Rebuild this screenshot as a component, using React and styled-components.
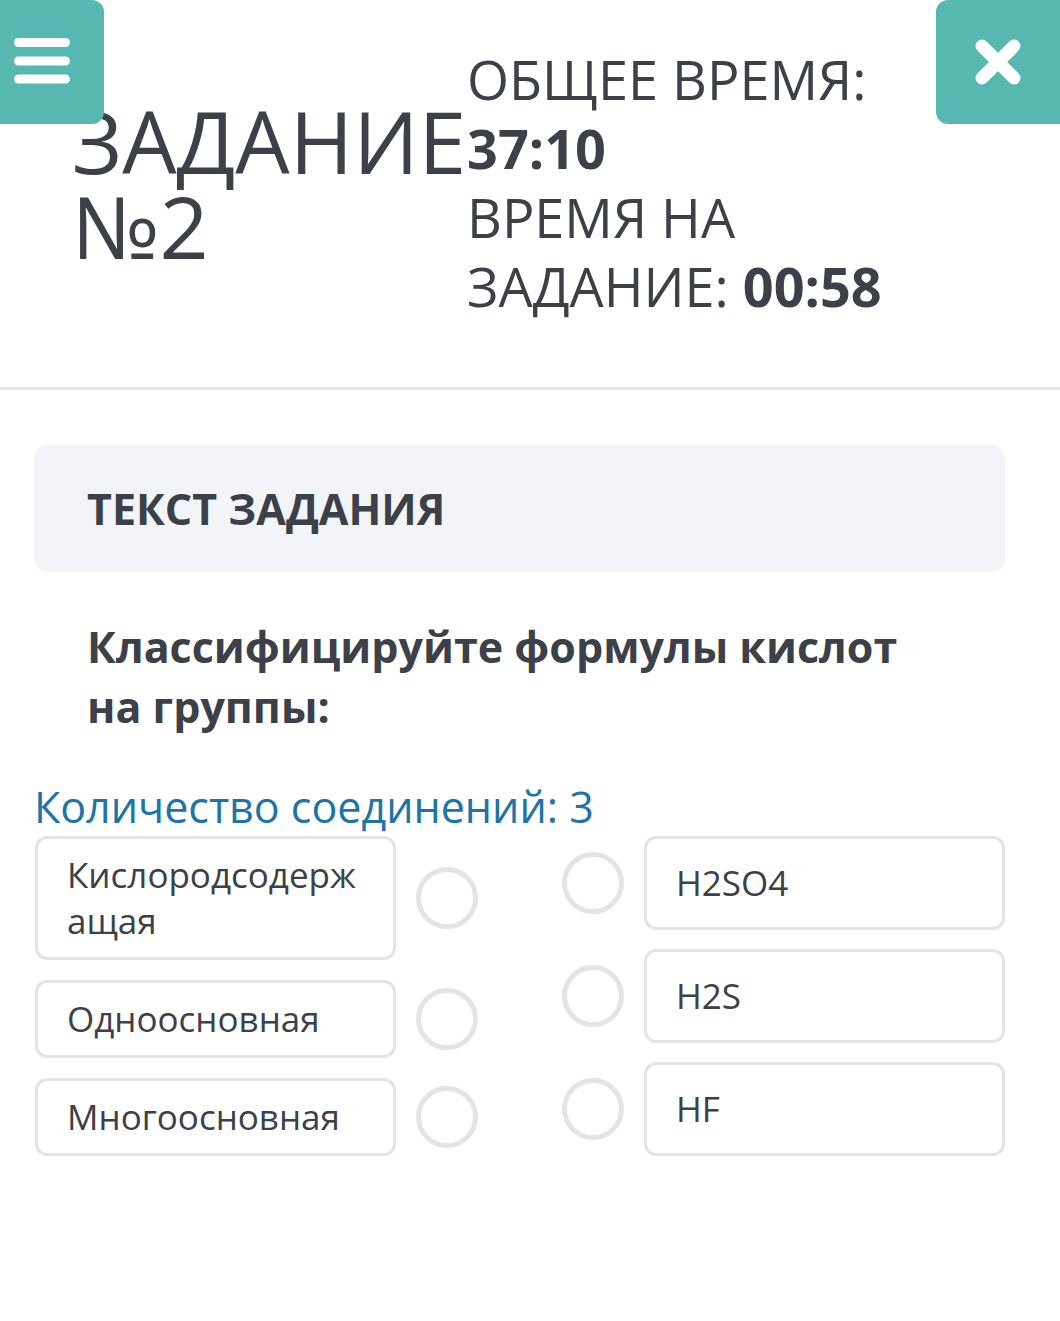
import React from 'react'
import styled, { createGlobalStyle } from 'styled-components'

const colors = {
  teal: '#56b8b0',
  text: '#3c4048',
  blue: '#1e73a8',
  line: '#e6e7e9',
  border: '#e2e4e7',
  panel: '#f3f4f8',
  white: '#ffffff',
}

const GlobalStyle = createGlobalStyle`
  body {
    margin: 0;
    background: ${colors.white};
    font-family: 'Open Sans', 'Noto Sans', sans-serif;
    color: ${colors.text};
  }
`

const Page = styled.div`
  position: relative;
  width: 1060px;
  min-height: 1321px;
`

const CornerButton = styled.button`
  position: absolute;
  top: 0;
  ${({ side }) => (side === 'left' ? 'left: 0;' : 'right: 0;')}
  width: ${({ side }) => (side === 'left' ? '104px' : '124px')};
  height: 124px;
  border: none;
  padding: 0;
  background: ${colors.teal};
  border-radius: ${({ side }) => (side === 'left' ? '0 12px 12px 0' : '12px 0 0 12px')};
  display: flex;
  align-items: center;
  justify-content: center;
  cursor: pointer;
  z-index: 2;
`

const MenuIcon = styled.svg`
  position: absolute;
  left: 14px;
  top: 38px;
`

const Header = styled.header`
  display: grid;
  grid-template-columns: 395px 460px;
  align-items: center;
  padding: 45px 0 66px 72px;
  border-bottom: 3px solid ${colors.line};
`

const Title = styled.h1`
  margin: 0;
  font-size: 86px;
  line-height: 85px;
  font-weight: 400;
  white-space: nowrap;
`

const Timer = styled.div`
  font-size: 54px;
  line-height: 69px;
  font-weight: 400;
`

const Value = styled.b`
  font-weight: 700;
`

const Main = styled.main`
  padding: 55px 55px 0 34px;
`

const TaskHead = styled.div`
  height: 127px;
  padding: 0 53px;
  display: flex;
  align-items: center;
  background: ${colors.panel};
  border-radius: 14px;
  font-size: 43px;
  font-weight: 700;
`

const Question = styled.p`
  margin: 45px 0 0;
  padding: 0 53px;
  font-size: 43px;
  line-height: 60px;
  font-weight: 700;
`

const Count = styled.div`
  margin: 40px 0 0;
  font-size: 43px;
  color: ${colors.blue};
`

const Options = styled.div`
  margin: 0 0 0 1px;
  display: grid;
  grid-template-columns: 443px 443px;
  column-gap: 84px;
`

const Column = styled.div`
  display: flex;
  flex-direction: column;
  gap: ${({ gap }) => gap}px;
`

const Row = styled.div`
  display: flex;
  align-items: center;
  gap: 20px;
`

const Card = styled.div`
  flex: 1;
  box-sizing: border-box;
  min-height: ${({ tall }) => (tall ? '94px' : '0')};
  display: flex;
  align-items: center;
  padding: 13px 29px;
  border: 3px solid ${colors.border};
  border-radius: 12px;
  font-size: 35px;
  line-height: 46px;
  word-break: break-all;
`

const Radio = styled.span`
  flex: none;
  box-sizing: border-box;
  width: 62px;
  height: 62px;
  border: 5px solid ${colors.border};
  border-radius: 50%;
`

const groups = ['Кислородсодержащая', 'Одноосновная', 'Многоосновная']
const formulas = ['H2SO4', 'H2S', 'HF']

export default function App() {
  return (
    <Page>
      <GlobalStyle />
      <CornerButton side="left" aria-label="menu">
        <MenuIcon width="56" height="46" viewBox="0 0 56 46">
          <g stroke="#fff" strokeWidth="9" strokeLinecap="round">
            <line x1="4.5" y1="4.5" x2="51.5" y2="4.5" />
            <line x1="4.5" y1="23" x2="51.5" y2="23" />
            <line x1="4.5" y1="41" x2="51.5" y2="41" />
          </g>
        </MenuIcon>
      </CornerButton>
      <CornerButton side="right" aria-label="close">
        <svg width="50" height="50" viewBox="0 0 50 50">
          <g stroke="#fff" strokeWidth="13" strokeLinecap="round">
            <line x1="9" y1="9" x2="41" y2="41" />
            <line x1="41" y1="9" x2="9" y2="41" />
          </g>
        </svg>
      </CornerButton>

      <Header>
        <Title>
          ЗАДАНИЕ
          <br />
          №2
        </Title>
        <Timer>
          ОБЩЕЕ ВРЕМЯ: <Value>37:10</Value>
          <br />
          ВРЕМЯ НА ЗАДАНИЕ: <Value>00:58</Value>
        </Timer>
      </Header>

      <Main>
        <TaskHead>ТЕКСТ ЗАДАНИЯ</TaskHead>
        <Question>
          Классифицируйте формулы кислот
          <br />
          на группы:
        </Question>
        <Count>Количество соединений: 3</Count>
        <Options>
          <Column gap={20}>
            {groups.map((g) => (
              <Row key={g}>
                <Card>{g}</Card>
                <Radio />
              </Row>
            ))}
          </Column>
          <Column gap={19}>
            {formulas.map((f) => (
              <Row key={f}>
                <Radio />
                <Card tall>{f}</Card>
              </Row>
            ))}
          </Column>
        </Options>
      </Main>
    </Page>
  )
}
